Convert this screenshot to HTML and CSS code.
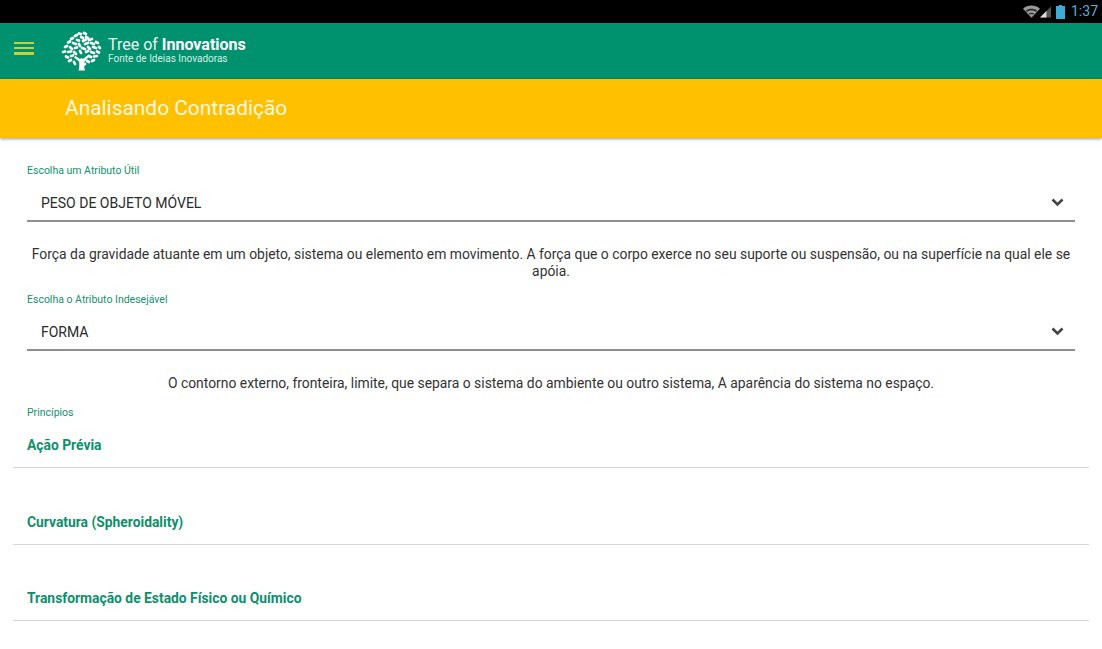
FILE: index.html
```
<!DOCTYPE html>
<html lang="pt">
<head>
<meta charset="utf-8">
<title>Analisando Contradição</title>
<link rel="stylesheet" href="styles.css">
</head>
<body>
<div class="statusbar">
  <svg class="st-wifi" width="17" height="13" viewBox="0 0 18 13"><path d="M0 3.500C5-.9 13-.9 18 3.500L9 13z" fill="#9a9a9a"/><path d="M3 5.600C6.500 2.800 11.500 2.800 15 5.600l-1.200 1.300C11 4.800 7 4.800 4.200 6.900z" fill="#2a2a2a"/><path d="M6 8.600c1.800-1.200 4.200-1.200 6 0l-1 1.100c-1.300-.8-2.700-.8-4 0z" fill="#2a2a2a"/></svg>
  <svg class="st-signal" width="11" height="12" viewBox="0 0 12 12"><path d="M12 0v12H0z" fill="#555"/><path d="M7 5v7H0z" fill="#ddd"/></svg>
  <svg class="st-batt" width="9" height="14" viewBox="0 0 9 14"><path d="M3 0h3v1h3v13H0V1h3z" fill="#3fa9d8"/></svg>
  <span class="st-time">1:37</span>
</div>
<header class="appbar">
  <button class="menu" aria-label="Menu"><span></span><span></span><span></span></button>
  <svg class="logo" width="41" height="40" viewBox="0 0 41 40">
    <path d="M17.500 39.500c1-3 1-6 .5-9l-5-4 1.500-1.500 4.500 3 1.500-1 1.500 1 5-4 1.500 1.500-5 5c-.5 3-.5 6 .5 9z" fill="#fff"/>
    <g stroke="#fff" stroke-width="2.700" stroke-linecap="round" fill="none">
      <path d="M18 2.500l2 .5M23 2l2 1M14 5l2-1M20 6l2 1M25 6l2 1M10 8l2-1M16 9l2 .5M22 10l3-1.500M28 9l3-1M7 11.500l2-1M12 12l3 1M18 13l1 2M24 13l3-1M30 12l3 1M35 11l2 1M4 16l2-1M9 16l2 2M14 17l2-.5M21 17l3 1M27 16l2 2M32 16l3 1M38 16l1 1M2 21l2-.5M7 21l3-.5M13 21l2 2M19 20l1 2M25 21l2-1M30 21l3 1M36 20.500l2 1M5 25.500l2 1M10 25l2-.5M28 25l2 1M33 25.500l3-.5M8 30l2-1M13 31l1 2M26 30l2 1M31 30l2-1M22 34l2-1"/>
    </g>
  </svg>
  <div class="brand">
    <div class="brand-title">Tree of <b>Innovations</b></div>
    <div class="brand-sub">Fonte de Ideias Inovadoras</div>
  </div>
</header>
<div class="titlebar"><h1>Analisando Contradição</h1></div>
<main class="content">
  <section class="field">
    <div class="field-label">Escolha um Atributo Útil</div>
    <div class="select"><span>PESO DE OBJETO MÓVEL</span><svg width="13" height="9" viewBox="0 0 13 9"><path d="M1.500 1.500L6.500 6.500l5-5" fill="none" stroke="#444" stroke-width="2.600"/></svg></div>
    <p class="desc desc-first">Força da gravidade atuante em um objeto, sistema ou elemento em movimento. A força que o corpo exerce no seu suporte ou suspensão, ou na superfície na qual ele se apóia.</p>
  </section>
  <section class="field">
    <div class="field-label">Escolha o Atributo Indesejável</div>
    <div class="select"><span>FORMA</span><svg width="13" height="9" viewBox="0 0 13 9"><path d="M1.500 1.500L6.500 6.500l5-5" fill="none" stroke="#444" stroke-width="2.600"/></svg></div>
    <p class="desc desc-second">O contorno externo, fronteira, limite, que separa o sistema do ambiente ou outro sistema, A aparência do sistema no espaço.</p>
  </section>
  <div class="field-label principles">Princípios</div>
  <ul class="list">
    <li>Ação Prévia</li>
    <li>Curvatura (Spheroidality)</li>
    <li>Transformação de Estado Físico ou Químico</li>
  </ul>
</main>
</body>
</html>
```
FILE: styles.css
```
* { box-sizing: border-box; }
html, body { margin: 0; padding: 0; }
body {
  width: 1102px;
  height: 649px;
  overflow: hidden;
  background: #fff;
  font-family: Roboto, "Liberation Sans", sans-serif;
  color: #333;
}
.statusbar {
  height: 23px;
  background: #000;
  display: flex;
  align-items: center;
  justify-content: flex-end;
  padding-right: 4px;
}
.st-signal { margin-right: 5px; }
.st-batt { margin-right: 6px; }
.st-time { color: #4fb3dc; font-size: 14px; line-height: 23px; }
.appbar {
  height: 56px;
  background: #00916e;
  display: flex;
  align-items: center;
  padding-bottom: 6px;
}
.menu {
  width: 20px;
  height: 13px;
  margin-left: 14px;
  padding: 0;
  border: 0;
  background: none;
  display: flex;
  flex-direction: column;
  justify-content: space-between;
}
.menu span { display: block; height: 2.500px; background: #c8cf3c; }
.logo { margin: 6px 0 0 27px; }
.brand { margin-left: 6px; color: #fff; padding-top: 3px; }
.brand-title { font-size: 16px; line-height: 17px; color: #e8f6f1; }
.brand-title b { font-weight: 700; color: #fff; }
.brand-sub { font-size: 10px; line-height: 10px; margin-top: 1px; color: #d5efe7; }
.titlebar {
  height: 59px;
  background: #ffc000;
  box-shadow: 0 1px 3px rgba(0,0,0,.4);
  display: flex;
  align-items: center;
  padding: 0 0 2px 65px;
  position: relative;
}
.titlebar h1 { margin: 0; font-size: 20.900px; font-weight: 400; color: #fff8e0; }
.content { padding: 26px 13px 0; }
.field { padding: 0 14px; }
.field-label { font-size: 10.500px; line-height: 14px; color: #14916f; }
.select {
  height: 42px;
  margin-top: 2px;
  padding: 5px 11px 0 14px;
  border-bottom: 2px solid #8f8f8f;
  display: flex;
  align-items: center;
  justify-content: space-between;
  font-size: 14px;
  color: #2a2a2a;
}
.desc {
  margin: 0;
  text-align: center;
  font-size: 13.890px;
  line-height: 17px;
  color: #333;
}
.desc-first { padding-top: 24px; height: 71px; }
.desc-second { padding-top: 24px; height: 55px; }
.principles { padding-left: 14px; }
.list { list-style: none; margin: 0; padding: 0; }
.list li {
  height: 48px;
  padding: 16px 14px 0;
  font-size: 13.850px;
  line-height: 18px;
  font-weight: 700;
  color: #0e8f6c;
  border-bottom: 1px solid #d6d6d6;
  margin-bottom: 28.500px;
}
```
